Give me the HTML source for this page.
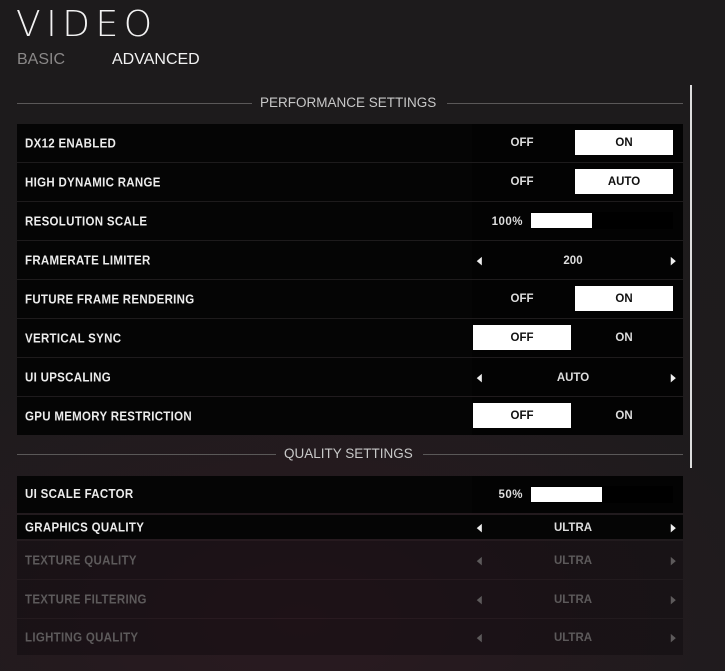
<!DOCTYPE html>
<html><head><meta charset="utf-8"><style>
*{margin:0;padding:0;box-sizing:border-box}
body{width:725px;height:671px;overflow:hidden;position:relative;font-family:"Liberation Sans",sans-serif;color:#e8e8e8;
background:radial-gradient(ellipse 500px 300px at 300px 620px,#2a1a20 0%,rgba(30,26,28,0) 100%),linear-gradient(#1d1b1c,#1e1b1d);}
.a{position:absolute}
.title{left:16px;top:4px;font-size:36px;letter-spacing:5.5px;color:#f2f2f2;font-family:"DejaVu Sans","Liberation Sans",sans-serif;font-weight:200}
.tab{top:51px;font-size:16px}
.line{height:1px;background:#5a5858}
.sec{font-size:13.5px;color:#c8c8c8}
.row{left:17px;width:666px;height:38px;background:#050505}
.row .l{position:absolute;left:8px;top:1px;line-height:38px;font-size:11.5px;font-weight:bold;letter-spacing:.3px;color:#ececec;transform:scaleY(1.1)}
.val{position:absolute;left:455px;top:0;width:211px;height:38px;background:#030303}
.off,.on{position:absolute;top:6px;width:98px;height:25px;line-height:27px;text-align:center;font-size:11.5px;font-weight:bold;color:#ddd}
.off{left:1px}.on{left:103px}
.w{background:#fff;color:#111}
.arr{position:absolute;top:1px;line-height:38px;font-size:11px;color:#eee;transform:scaleX(.6)}
.cv{position:absolute;left:0;width:202px;text-align:center;top:1px;line-height:38px;font-size:11.5px;font-weight:bold;color:#ddd}
.dis{background:rgba(10,6,8,.35)}
.dis .l,.dis .cv,.dis .arr{color:#5d5a5b}
.track{position:absolute;left:59px;top:10px;width:142px;height:17px;background:#000}
.pct{position:absolute;right:160px;top:1px;line-height:38px;font-size:11.5px;font-weight:bold;color:#ddd;letter-spacing:.5px}
</style></head><body>
<div class="a title">VIDEO</div>
<div class="a tab" style="left:17px;color:#8a8888">BASIC</div>
<div class="a tab" style="left:112px;color:#f2f2f2">ADVANCED</div>

<div class="a line" style="left:17px;top:103px;width:235px"></div>
<div class="a sec" style="left:260px;top:95px">PERFORMANCE SETTINGS</div>
<div class="a line" style="left:447px;top:103px;width:236px"></div>
<div class="a" style="left:690px;top:85px;width:2px;height:383px;background:#ddd"></div>

<div class="a row" style="top:124px"><div class="l">DX12 ENABLED</div><div class="val"><div class="off">OFF</div><div class="on w">ON</div></div></div>
<div class="a row" style="top:163px"><div class="l">HIGH DYNAMIC RANGE</div><div class="val"><div class="off">OFF</div><div class="on w">AUTO</div></div></div>
<div class="a row" style="top:202px"><div class="l">RESOLUTION SCALE</div><div class="val"><div class="pct">100%</div><div class="track"><div style="position:absolute;left:0;top:1px;width:61px;height:15px;background:#fff"></div></div></div></div>
<div class="a row" style="top:241px"><div class="l">FRAMERATE LIMITER</div><div class="val"><div class="arr" style="left:3px">◀</div><div class="cv">200</div><div class="arr" style="left:197px">▶</div></div></div>
<div class="a row" style="top:280px"><div class="l">FUTURE FRAME RENDERING</div><div class="val"><div class="off">OFF</div><div class="on w">ON</div></div></div>
<div class="a row" style="top:319px"><div class="l">VERTICAL SYNC</div><div class="val"><div class="off w">OFF</div><div class="on">ON</div></div></div>
<div class="a row" style="top:358px"><div class="l">UI UPSCALING</div><div class="val"><div class="arr" style="left:3px">◀</div><div class="cv">AUTO</div><div class="arr" style="left:197px">▶</div></div></div>
<div class="a row" style="top:397px"><div class="l">GPU MEMORY RESTRICTION</div><div class="val"><div class="off w">OFF</div><div class="on">ON</div></div></div>

<div class="a line" style="left:17px;top:454px;width:259px"></div>
<div class="a sec" style="left:284px;top:446px">QUALITY SETTINGS</div>
<div class="a line" style="left:423px;top:454px;width:260px"></div>

<div class="a row" style="top:476px;height:37px"><div class="l" style="line-height:37px">UI SCALE FACTOR</div><div class="val" style="height:37px"><div class="pct" style="line-height:37px">50%</div><div class="track"><div style="position:absolute;left:0;top:1px;width:71px;height:15px;background:#fff"></div></div></div></div>
<div class="a row" style="top:515px;height:24px"><div class="l" style="line-height:24px">GRAPHICS QUALITY</div><div class="val" style="height:24px;background:none"><div class="arr" style="left:3px;line-height:24px">◀</div><div class="cv" style="line-height:24px">ULTRA</div><div class="arr" style="left:197px;line-height:24px">▶</div></div></div>
<div class="a row dis" style="top:541px"><div class="l">TEXTURE QUALITY</div><div class="val" style="background:none"><div class="arr" style="left:3px">◀</div><div class="cv">ULTRA</div><div class="arr" style="left:197px">▶</div></div></div>
<div class="a row dis" style="top:580px"><div class="l">TEXTURE FILTERING</div><div class="val" style="background:none"><div class="arr" style="left:3px">◀</div><div class="cv">ULTRA</div><div class="arr" style="left:197px">▶</div></div></div>
<div class="a row dis" style="top:619px;height:36px"><div class="l" style="line-height:36px">LIGHTING QUALITY</div><div class="val" style="background:none;height:36px"><div class="arr" style="left:3px;line-height:36px">◀</div><div class="cv" style="line-height:36px">ULTRA</div><div class="arr" style="left:197px;line-height:36px">▶</div></div></div>
</body></html>
